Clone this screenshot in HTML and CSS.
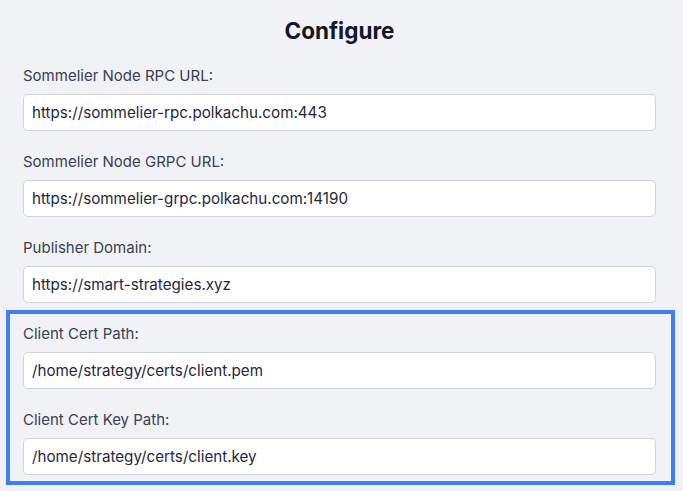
FILE: index.html
```html
<!DOCTYPE html>
<html>
<head>
<meta charset="utf-8">
<link rel="stylesheet" href="styles.css">
</head>
<body>
<main class="page">
  <h1 class="title">Configure</h1>
  <form class="form">
    <div class="field">
      <label class="label">Sommelier Node RPC URL:</label>
      <input class="input" type="text" value="https://sommelier-rpc.polkachu.com:443">
    </div>
    <div class="field">
      <label class="label">Sommelier Node GRPC URL:</label>
      <input class="input" type="text" value="https://sommelier-grpc.polkachu.com:14190">
    </div>
    <div class="field">
      <label class="label">Publisher Domain:</label>
      <input class="input" type="text" value="https://smart-strategies.xyz">
    </div>
    <div class="highlight">
      <div class="field">
        <label class="label">Client Cert Path:</label>
        <input class="input" type="text" value="/home/strategy/certs/client.pem">
      </div>
      <div class="field">
        <label class="label">Client Cert Key Path:</label>
        <input class="input" type="text" value="/home/strategy/certs/client.key">
      </div>
    </div>
  </form>
</main>
</body>
</html>
```
FILE: styles.css
```css
html, body {
  margin: 0;
  padding: 0;
  background: #f1f2f6;
  overflow: hidden;
}
.page {
  padding: 17px 27px 0 23px;
  font-family: Inter, "Liberation Sans", sans-serif;
}
.title {
  margin: 0 0 21px 0;
  font-family: Inter, "Liberation Sans", sans-serif;
  font-weight: 700;
  font-size: 22.5px;
  line-height: 28px;
  text-align: center;
  color: #111827;
}
.form {
  display: flex;
  flex-direction: column;
  gap: 21px;
  margin: 0;
}
.field {
  display: flex;
  flex-direction: column;
  gap: 8px;
}
.label {
  font-size: 15px;
  line-height: 20px;
  color: #374151;
}
.input {
  box-sizing: border-box;
  height: 37px;
  margin: 0;
  padding: 0 8px;
  border: 1px solid #d1d5db;
  border-radius: 5px;
  background: #ffffff;
  font-family: Inter, "Liberation Sans", sans-serif;
  font-size: 15.2px;
  color: #1f2937;
  outline: none;
}
.highlight {
  display: flex;
  flex-direction: column;
  gap: 21px;
  margin: -14px -19px 0 -17px;
  padding: 10px 15px 6px 13px;
  border: 4px solid #3f7ef5;
}
```
